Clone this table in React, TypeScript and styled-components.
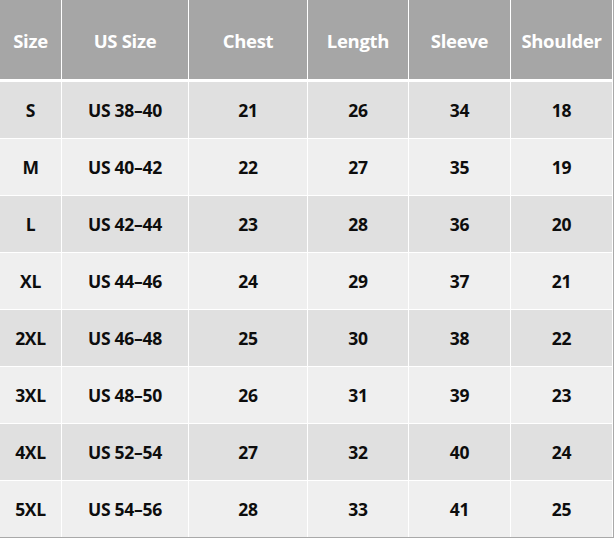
import styled, { createGlobalStyle } from 'styled-components';

const GlobalStyle = createGlobalStyle`
    html, body {
        margin: 0;
        padding: 0;
        background: #ffffff;
    }
`;

const Table = styled.div`
    width: 614px;
    height: 538px;
    box-sizing: border-box;
    display: grid;
    grid-template-columns: 61px 126px 118px 100px 101px 101px;
    grid-template-rows: 81px repeat(8, 56px);
    column-gap: 1px;
    row-gap: 1px;
    background-color: #ffffff;
    border-right: 1px solid #a9a9a9;
    border-bottom: 1px solid #a9a9a9;
    font-family: 'Open Sans', 'Noto Sans', sans-serif;
    font-weight: 700;
`;

const HeadCell = styled.div`
    display: flex;
    align-items: center;
    justify-content: center;
    background-color: #a6a6a6;
    color: #ffffff;
    font-size: 18.5px;
    margin-bottom: 2px;
    padding-top: 2px;
    letter-spacing: -0.3px;
`;

const Cell = styled.div<{ dark: boolean }>`
    display: flex;
    align-items: center;
    justify-content: center;
    background-color: ${(props) => (props.dark ? '#e0e0e0' : '#efefef')};
    color: #0d0d0d;
    font-size: 17.5px;
    letter-spacing: -0.3px;
`;

const headers = ['Size', 'US Size', 'Chest', 'Length', 'Sleeve', 'Shoulder'];

const rows = [
    ['S', 'US 38–40', '21', '26', '34', '18'],
    ['M', 'US 40–42', '22', '27', '35', '19'],
    ['L', 'US 42–44', '23', '28', '36', '20'],
    ['XL', 'US 44–46', '24', '29', '37', '21'],
    ['2XL', 'US 46–48', '25', '30', '38', '22'],
    ['3XL', 'US 48–50', '26', '31', '39', '23'],
    ['4XL', 'US 52–54', '27', '32', '40', '24'],
    ['5XL', 'US 54–56', '28', '33', '41', '25'],
];

export default function App() {
    return (
        <>
            <GlobalStyle />
            <Table>
                {headers.map((h) => (
                    <HeadCell key={h}>{h}</HeadCell>
                ))}
                {rows.map((row, i) =>
                    row.map((value, j) => (
                        <Cell key={`${i}-${j}`} dark={i % 2 === 0}>
                            {value}
                        </Cell>
                    ))
                )}
            </Table>
        </>
    );
}
